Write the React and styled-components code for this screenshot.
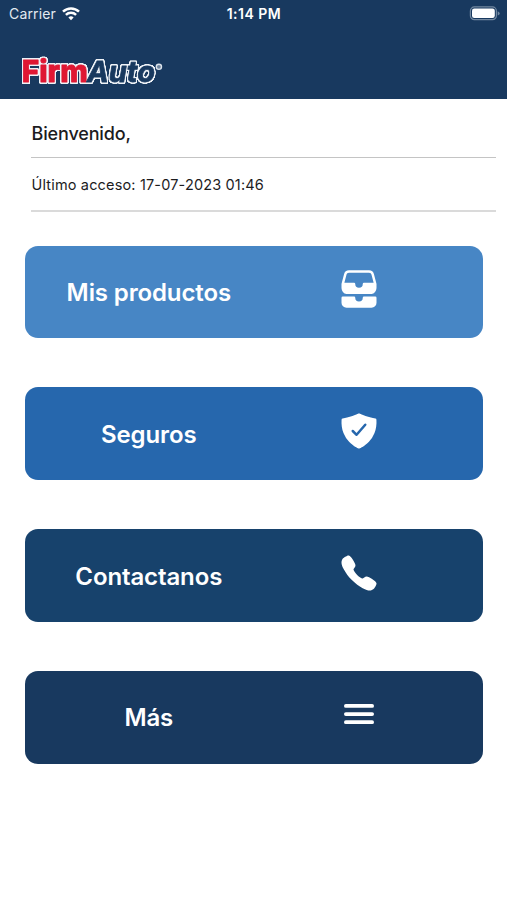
import React from "react";
import styled, { createGlobalStyle } from "styled-components";
import { IoFileTrayStacked, IoShieldCheckmark, IoCall, IoMenu } from "react-icons/io5";

const GlobalStyle = createGlobalStyle`
  * { box-sizing: border-box; }
  body {
    margin: 0;
    background: #fff;
    font-family: Inter, "Liberation Sans", sans-serif;
  }
`;

const Screen = styled.main`
  width: 507px;
  height: 900px;
  overflow: hidden;
  background: #fff;
`;

const Header = styled.header`
  height: 98.5px;
  background: #18395f;
  color: #fff;
`;

const StatusBar = styled.div`
  display: grid;
  grid-template-columns: 1fr auto 1fr;
  align-items: center;
  height: 27px;
  padding: 0 7px 0 9px;
`;

const Carrier = styled.div`
  display: flex;
  align-items: center;
  gap: 6px;
  font-size: 14px;
  letter-spacing: 0.15px;
  color: #e3eaf1;
`;

const Clock = styled.div`
  margin-right: 1px;
  font-size: 14px;
  font-weight: 600;
  letter-spacing: 0.5px;
`;

const BatterySlot = styled.div`
  display: flex;
  justify-content: flex-end;
`;

const Brand = styled.div`
  padding: 24px 0 0 16px;
  line-height: 0;
`;

const Welcome = styled.section`
  margin: 0 11px 0 31px;
  color: #1c1c1e;
`;

const Greeting = styled.h1`
  display: flex;
  align-items: center;
  height: 59.5px;
  margin: 0;
  padding: 11px 0 0 0.5px;
  border-bottom: 1.5px solid #c4c4c4;
  font-size: 18px;
  font-weight: 500;
  letter-spacing: -0.15px;
`;

const LastAccess = styled.p`
  display: flex;
  align-items: center;
  height: 54px;
  margin: 0;
  padding: 1px 0 0 0.5px;
  border-bottom: 2px solid #dadada;
  font-size: 14.5px;
  letter-spacing: 0.16px;
`;

const Menu = styled.nav`
  display: flex;
  flex-direction: column;
  gap: 49px;
  padding: 33.8px 24.5px 0 25.3px;
`;

const MenuButton = styled.button`
  display: grid;
  grid-template-columns: 247px 174px;
  align-items: center;
  height: 92.7px;
  padding: 0;
  border: 0;
  border-radius: 13px;
  background: ${({ $color }) => $color};
  color: #fff;
  font-family: inherit;
`;

const Label = styled.span`
  padding-top: 1px;
  font-size: 24px;
  font-weight: 600;
  letter-spacing: -0.12px;
  text-align: center;
`;

const IconSlot = styled.span`
  display: flex;
  justify-content: center;
  padding-bottom: 6px;
  font-size: 40px;
`;

const items = [
  { label: "Mis productos", color: "#4786c5", Icon: IoFileTrayStacked },
  { label: "Seguros", color: "#2667ad", Icon: IoShieldCheckmark },
  { label: "Contactanos", color: "#17426c", Icon: IoCall },
  { label: "Más", color: "#18395f", Icon: IoMenu },
];

function Wifi() {
  return (
    <svg width="18" height="14" viewBox="0 0 18 14" fill="none" stroke="#fff" strokeWidth="2.5">
      <path d="M1 4.7a11.6 11.6 0 0 1 16 0M3.9 7.9a7.4 7.4 0 0 1 10.2 0" />
      <path d="M9 13.2 6.4 10.5a3.8 3.8 0 0 1 5.2 0Z" fill="#fff" stroke="none" />
    </svg>
  );
}

function Battery() {
  return (
    <svg width="31" height="15" viewBox="0 0 31 15">
      <rect x="1.4" y=".9" width="26" height="12.8" rx="4" fill="none" stroke="#7288a0" strokeWidth="1.2" />
      <rect x="3" y="2.5" width="22.8" height="9.6" rx="2.3" fill="#fff" />
      <path d="M28.7 5.2q2 .8 2 2.2t-2 2.2Z" fill="#7288a0" />
    </svg>
  );
}

function Logo() {
  return (
    <svg width="152" height="40" viewBox="16 51 152 40" role="img" aria-label="FirmAuto">
      <defs>
        <filter id="logo-outline" x="-5%" y="-15%" width="110%" height="130%" colorInterpolationFilters="sRGB">
          <feMorphology in="SourceAlpha" operator="dilate" radius="1" result="grown" />
          <feGaussianBlur in="grown" stdDeviation="0.7" result="soft" />
          <feComponentTransfer in="soft" result="edge">
            <feFuncA type="linear" slope="2.6" intercept="0" />
          </feComponentTransfer>
          <feFlood floodColor="#eef2f7" />
          <feComposite in2="edge" operator="in" result="outline" />
          <feMerge>
            <feMergeNode in="outline" />
            <feMergeNode in="SourceGraphic" />
          </feMerge>
        </filter>
      </defs>
      <g fontFamily="Inter, sans-serif" strokeWidth="0.8" strokeLinejoin="round" filter="url(#logo-outline)">
        <text x="21.8" y="82" fontSize="30" fontWeight="800" textLength="66" lengthAdjust="spacingAndGlyphs" fill="#df1733" stroke="#df1733">
          Firm
        </text>
        <text x="87" y="82" fontSize="29" fontStyle="italic" fontWeight="700" textLength="68" lengthAdjust="spacingAndGlyphs" fill="#18395f" stroke="#18395f">
          Auto
        </text>
      </g>
      <circle cx="158.9" cy="66.8" r="2.6" fill="#6d839c" stroke="#dbe3eb" strokeWidth="1.4" />
    </svg>
  );
}

export default function App() {
  return (
    <Screen>
      <GlobalStyle />
      <Header>
        <StatusBar>
          <Carrier>
            Carrier
            <Wifi />
          </Carrier>
          <Clock>1:14 PM</Clock>
          <BatterySlot>
            <Battery />
          </BatterySlot>
        </StatusBar>
        <Brand>
          <Logo />
        </Brand>
      </Header>
      <Welcome>
        <Greeting>Bienvenido,</Greeting>
        <LastAccess>Último acceso: 17-07-2023 01:46</LastAccess>
      </Welcome>
      <Menu>
        {items.map(({ label, color, Icon }) => (
          <MenuButton key={label} $color={color}>
            <Label>{label}</Label>
            <IconSlot>
              <Icon />
            </IconSlot>
          </MenuButton>
        ))}
      </Menu>
    </Screen>
  );
}
